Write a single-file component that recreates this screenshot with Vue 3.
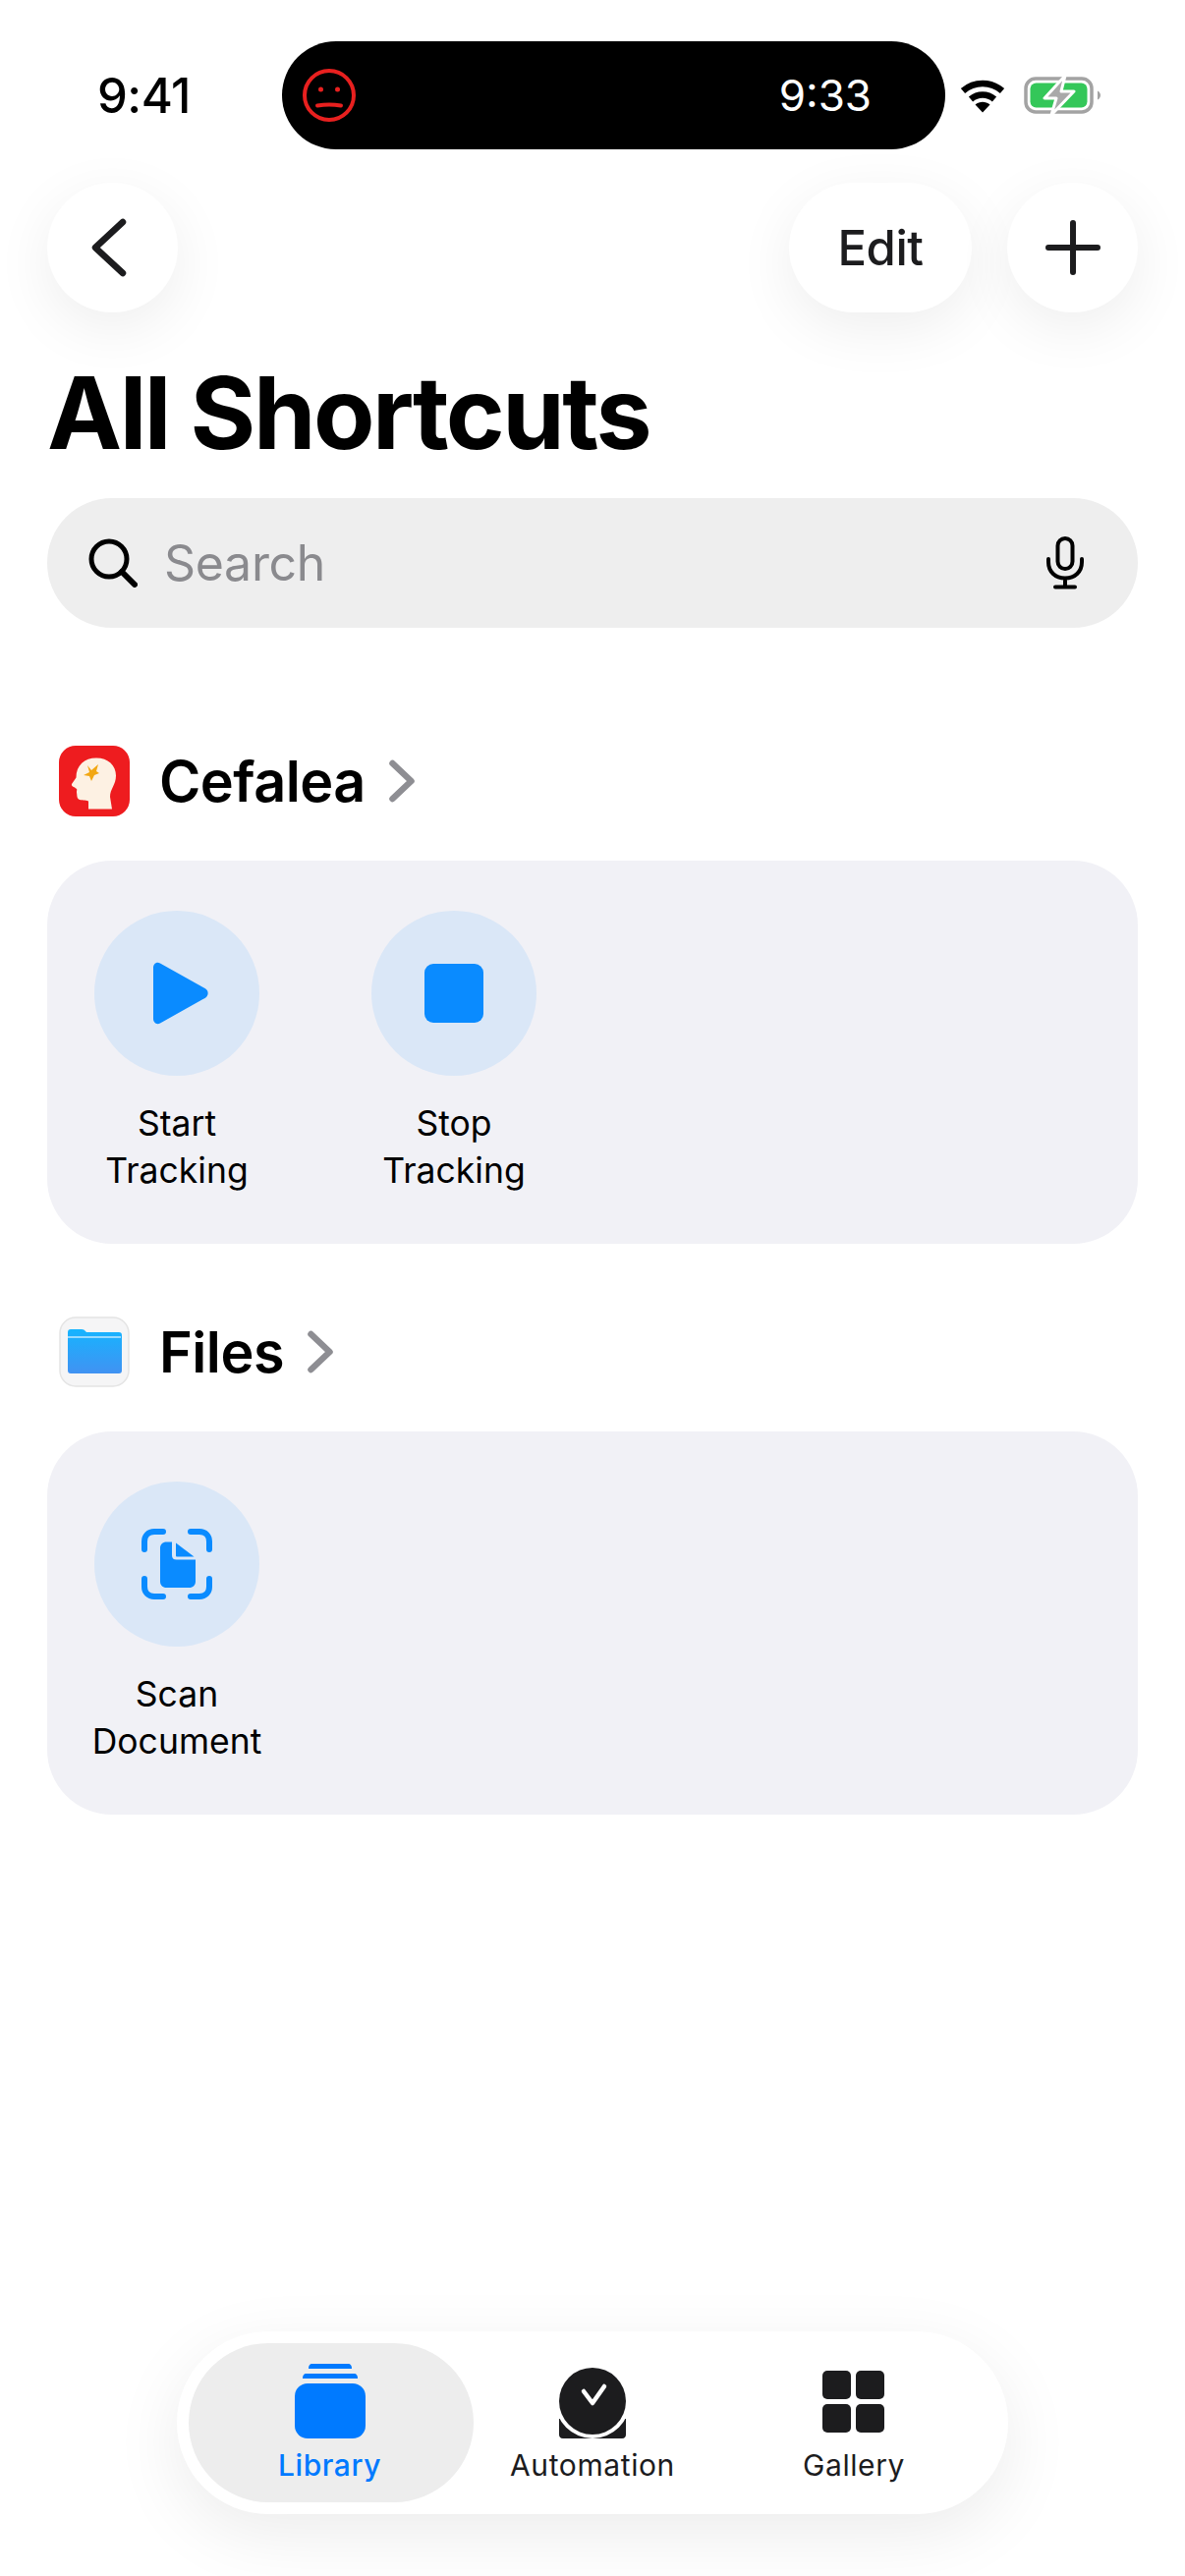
<script setup>
const sections = [
  {
    name: 'Cefalea',
    app: 'head',
    actions: [
      { id: 'play', lines: ['Start', 'Tracking'] },
      { id: 'stop', lines: ['Stop', 'Tracking'] }
    ]
  },
  {
    name: 'Files',
    app: 'folder',
    actions: [{ id: 'scan', lines: ['Scan', 'Document'] }]
  }
]
</script>

<template>
  <div class="page">
    <div class="status-bar">
      <span class="clock">9:41</span>
      <div class="island">
        <svg class="face" width="54" height="54" viewBox="0 0 54 54" fill="none">
          <circle cx="27" cy="27" r="25" stroke="#e8201f" stroke-width="4" />
          <circle cx="18.5" cy="21" r="2.5" fill="#e8201f" />
          <circle cx="35.5" cy="21" r="2.5" fill="#e8201f" />
          <path d="M15 37.5c8-1.4 16-1.4 24 0" stroke="#e8201f" stroke-width="4" stroke-linecap="round" />
        </svg>
        <span class="island-time">9:33</span>
      </div>
      <svg class="wifi" width="48" height="36" viewBox="0 0 46 36" fill="none">
        <path d="M3 13.500c11.500-10 28.500-10 40 0" stroke="#000" stroke-width="6.500" />
        <path d="M11 22c7-6 17-6 24 0" stroke="#000" stroke-width="6.500" />
        <path d="M15.500 27.500c4.500-3.600 10.500-3.600 15 0L23 35.500z" fill="#000" />
      </svg>
      <svg class="battery" width="78" height="38" viewBox="0 0 78 38" fill="none">
        <rect x="2" y="2" width="67" height="34" rx="10" stroke="#a3a3a3" stroke-width="3.500" />
        <rect x="6.500" y="6.500" width="58" height="25" rx="6" fill="#34c759" />
        <path d="M75 14.500c2 1 3 2.600 3 4.500s-1 3.500-3 4.500z" fill="#a3a3a3" />
        <path d="M42 -1 L21 22 H33 L28 39 L51 15 H38 Z" fill="#a9a9a9" stroke="#fff" stroke-width="3" stroke-linejoin="round" />
      </svg>
    </div>

    <div class="nav">
      <button class="round-btn">
        <svg class="back" width="44" height="60" viewBox="0 0 44 60" fill="none">
          <path d="M36 4 L8 30 L36 56" stroke="#1c1c1e" stroke-width="6.500" stroke-linecap="round" stroke-linejoin="round" />
        </svg>
      </button>
      <div class="nav-right">
        <button class="edit-btn">Edit</button>
        <button class="round-btn">
          <svg width="56" height="56" viewBox="0 0 56 56" fill="none">
            <path d="M28 3v50M3 28h50" stroke="#1c1c1e" stroke-width="6" stroke-linecap="round" />
          </svg>
        </button>
      </div>
    </div>

    <h1 class="title">All Shortcuts</h1>

    <div class="search">
      <svg class="search-icon" width="50" height="50" viewBox="0 0 50 50" fill="none">
        <circle cx="21" cy="21" r="18" stroke="#000" stroke-width="5" />
        <path d="M34 34 L47 47" stroke="#000" stroke-width="6" stroke-linecap="round" />
      </svg>
      <span class="search-text">Search</span>
      <svg class="mic" width="40" height="54" viewBox="0 0 40 54" fill="none">
        <rect x="12.500" y="2" width="15" height="31" rx="7.500" stroke="#000" stroke-width="4" />
        <path d="M3 23v3c0 10 7 16.500 17 16.500S37 36 37 26v-3M20 43v8M10 51.500h20" stroke="#000" stroke-width="4" stroke-linecap="round" />
      </svg>
    </div>

    <section v-for="section in sections" :key="section.name" class="section">
      <div class="section-head">
        <svg v-if="section.app === 'head'" class="app-icon" width="72" height="72" viewBox="0 0 72 72">
          <rect width="72" height="72" rx="17" fill="#ee1c1f" />
          <path d="M30 64.500V56.500c-3-1.500-7.500-.2-10-2-2-1.500-1.500-4.500-2-7-.3-1.500.8-2.500 0-3.500-1-.8-1.500-1-2-1.500-2.500-.8-3.500-2-3-3.500l4.500-6.500C17.500 20 26 12.500 38 12.500c12 0 20 7.500 20 18 0 9.500-6 13.500-6 21.500l2 12.500z" fill="#fdf1e3" />
          <path d="M33 25 L40 19 L38 26 L41 28 L36 30 L33 36 L31 31 L25 30 L31 27 L29 20z" fill="#f2a713" />
        </svg>
        <svg v-else class="app-icon" width="72" height="72" viewBox="0 0 72 72">
          <defs>
            <linearGradient id="folderFill" x1="0" y1="0" x2="0" y2="1">
              <stop offset="0" stop-color="#16b4ff" />
              <stop offset="1" stop-color="#4192f2" />
            </linearGradient>
          </defs>
          <rect x="1" y="1" width="70" height="70" rx="16" fill="#f5f5f6" stroke="#e4e4e4" stroke-width="1.500" />
          <path d="M9 16c0-2 1-3 3-3h11c2 0 3 .8 4 2l1 1h33c2 0 3 1 3 3v36c0 2-1 3-3 3H12c-2 0-3-1-3-3z" fill="url(#folderFill)" />
          <path d="M9 21h54" stroke="#bfe9ff" stroke-width="1.500" />
        </svg>
        <h2 class="section-name">{{ section.name }}</h2>
        <svg class="chevron" width="28" height="44" viewBox="0 0 28 44" fill="none">
          <path d="M4.500 4 L23.500 22 L4.500 40" stroke="#8e8e93" stroke-width="6.500" stroke-linecap="round" stroke-linejoin="round" />
        </svg>
      </div>
      <div class="card">
        <div v-for="action in section.actions" :key="action.id" class="action">
          <div class="action-circle">
            <svg v-if="action.id === 'play'" class="play" width="56" height="64" viewBox="0 0 56 62" preserveAspectRatio="none">
              <path d="M0 6c0-4 3.500-6.500 7-4.500l46 25c3.500 2 3.500 7 0 9l-46 25c-3.500 2-7-.5-7-4.500z" fill="#0a8bff" />
            </svg>
            <div v-else-if="action.id === 'stop'" class="stop"></div>
            <svg v-else class="scan" width="72" height="72" viewBox="0 0 72 72" fill="none">
              <path d="M3 21V13C3 7 7 3 13 3h9M50 3h9c6 0 10 4 10 10v8M3 51v8c0 6 4 10 10 10h9M69 51v8c0 6-4 10-10 10h-9" stroke="#0a8bff" stroke-width="6" stroke-linecap="round" />
              <path d="M19 20c0-4 2.500-6.500 6.500-6.500h5.500v13.500c0 3 1.500 4.500 4.500 4.500h19.500v22c0 4-2.500 6.500-6.500 6.500H25.500c-4 0-6.500-2.500-6.500-6.500z" fill="#0a8bff" />
              <path d="M35 14.500v13c0 .5.500 1 1 1h17.500z" fill="#0a8bff" />
            </svg>
          </div>
          <div class="action-label">
            <span v-for="line in action.lines" :key="line">{{ line }}</span>
          </div>
        </div>
      </div>
    </section>

    <nav class="tabs">
      <div class="tab tab-library">
        <svg width="72" height="76" viewBox="0 0 72 76">
          <path d="M14 5c0-3 1-5 4-5h36c3 0 4 2 4 5z" fill="#007aff" />
          <path d="M8 15c0-3 1-5 4-5h48c3 0 4 2 4 5z" fill="#007aff" />
          <rect y="20" width="72" height="56" rx="13" fill="#007aff" />
        </svg>
        <span class="tab-label">Library</span>
      </div>
      <div class="tab tab-auto">
        <svg width="72" height="76" viewBox="0 0 72 76" fill="none">
          <path d="M2 56h68v16c0 2-1 4-4 4H6c-3 0-4-2-4-4z" fill="#1c1c1e" />
          <circle cx="36" cy="38" r="38" fill="#fff" />
          <circle cx="36" cy="38" r="34" fill="#1c1c1e" />
          <path d="M27 28 L36 40 L48 23" stroke="#fff" stroke-width="4.500" stroke-linecap="round" stroke-linejoin="round" />
        </svg>
        <span class="tab-label">Automation</span>
      </div>
      <div class="tab tab-gallery">
        <svg width="72" height="76" viewBox="0 0 72 76">
          <rect x="4" y="7" width="29" height="29" rx="5" fill="#1c1c1e" />
          <rect x="38" y="7" width="29" height="29" rx="5" fill="#1c1c1e" />
          <rect x="4" y="41" width="29" height="29" rx="5" fill="#1c1c1e" />
          <rect x="38" y="41" width="29" height="29" rx="5" fill="#1c1c1e" />
        </svg>
        <span class="tab-label">Gallery</span>
      </div>
    </nav>
  </div>
</template>

<style>
html,
body {
  margin: 0;
  background: #fff;
}
</style>

<style scoped>
.page {
  width: 1206px;
  height: 2622px;
  display: flex;
  flex-direction: column;
  overflow: hidden;
  background: #fff;
  font-family: Inter, "Liberation Sans", sans-serif;
  color: #000;
}

.status-bar {
  display: flex;
  align-items: center;
  height: 110px;
  padding-top: 42px;
}
.clock {
  width: 287px;
  box-sizing: border-box;
  padding-left: 99px;
  font-size: 49px;
  font-weight: 500;
  letter-spacing: -0.5px;
}
.island {
  width: 675px;
  height: 110px;
  border-radius: 55px;
  background: #000;
  display: flex;
  align-items: center;
  justify-content: space-between;
  padding: 0 75px 0 21px;
  box-sizing: border-box;
}
.island-time {
  color: #fff;
  font-size: 44px;
  font-weight: 400;
}
.wifi {
  margin-left: 14px;
}
.battery {
  margin-left: 18px;
}

.nav {
  display: flex;
  justify-content: space-between;
  padding: 34px 48px 0;
}
.nav-right {
  display: flex;
  gap: 36px;
}
.round-btn,
.edit-btn {
  height: 132px;
  border: none;
  background: #fff;
  border-radius: 66px;
  box-shadow: 0 16px 60px rgba(0, 0, 0, 0.07);
  display: flex;
  align-items: center;
  justify-content: center;
  padding: 0;
}
.round-btn {
  width: 133px;
}
.back {
  margin-right: 8px;
}
.edit-btn {
  width: 186px;
  font-family: inherit;
  font-size: 49px;
  font-weight: 500;
  letter-spacing: -0.5px;
  color: #1c1c1e;
}

.title {
  margin: 44px 0 0 48px;
  font-size: 102px;
  line-height: 116px;
  font-weight: 700;
  letter-spacing: -2.500px;
}

.search {
  margin: 29px 48px 0;
  height: 132px;
  border-radius: 66px;
  background: #eeeeee;
  display: flex;
  align-items: center;
  padding: 0 54px 0 42px;
}
.search-text {
  margin-left: 27px;
  flex: 1;
  font-size: 50px;
  letter-spacing: -0.3px;
  color: #8a8a8e;
}

.section {
  display: flex;
  flex-direction: column;
  margin: 74px 48px 0;
}
.section:first-of-type {
  margin-top: 120px;
}
.section-head {
  display: flex;
  align-items: center;
  height: 72px;
  padding-left: 12px;
}
.section-name {
  margin: 0 0 0 30px;
  font-size: 57.5px;
  font-weight: 600;
  letter-spacing: -0.500px;
}
.chevron {
  margin-left: 23px;
}
.card {
  margin-top: 45px;
  height: 390px;
  box-sizing: border-box;
  border-radius: 66px;
  background: #f1f1f6;
  padding: 51px 48px 0;
  display: flex;
  gap: 114px;
}
.action {
  width: 168px;
  display: flex;
  flex-direction: column;
  align-items: center;
}
.action-circle {
  width: 168px;
  height: 168px;
  border-radius: 50%;
  background: #dae7f7;
  display: flex;
  align-items: center;
  justify-content: center;
}
.play {
  margin-left: 8px;
}
.stop {
  width: 60px;
  height: 60px;
  border-radius: 9px;
  background: #0a8bff;
}
.action-label {
  margin-top: 25px;
  display: flex;
  flex-direction: column;
  align-items: center;
  font-size: 35.5px;
  line-height: 48px;
  white-space: nowrap;
}

.tabs {
  margin: auto 0 63px 180px;
  width: 846px;
  height: 186px;
  box-sizing: border-box;
  padding: 12px;
  border-radius: 93px;
  background: #fff;
  box-shadow: 0 20px 70px rgba(0, 0, 0, 0.08);
  display: flex;
}
.tab {
  display: flex;
  flex-direction: column;
  align-items: center;
  padding-top: 21px;
  box-sizing: border-box;
}
.tab-library {
  width: 290px;
  padding-right: 3px;
  border-radius: 81px;
  background: #ededed;
  color: #007aff;
}
.tab-auto {
  width: 242px;
  color: #1c1c1e;
}
.tab-gallery {
  width: 290px;
  color: #1c1c1e;
}
.tab-label {
  margin-top: 9px;
  font-size: 30px;
  line-height: 36px;
  font-weight: 400;
  letter-spacing: 0.6px;
}
.tab-library .tab-label {
  font-weight: 500;
}
</style>
